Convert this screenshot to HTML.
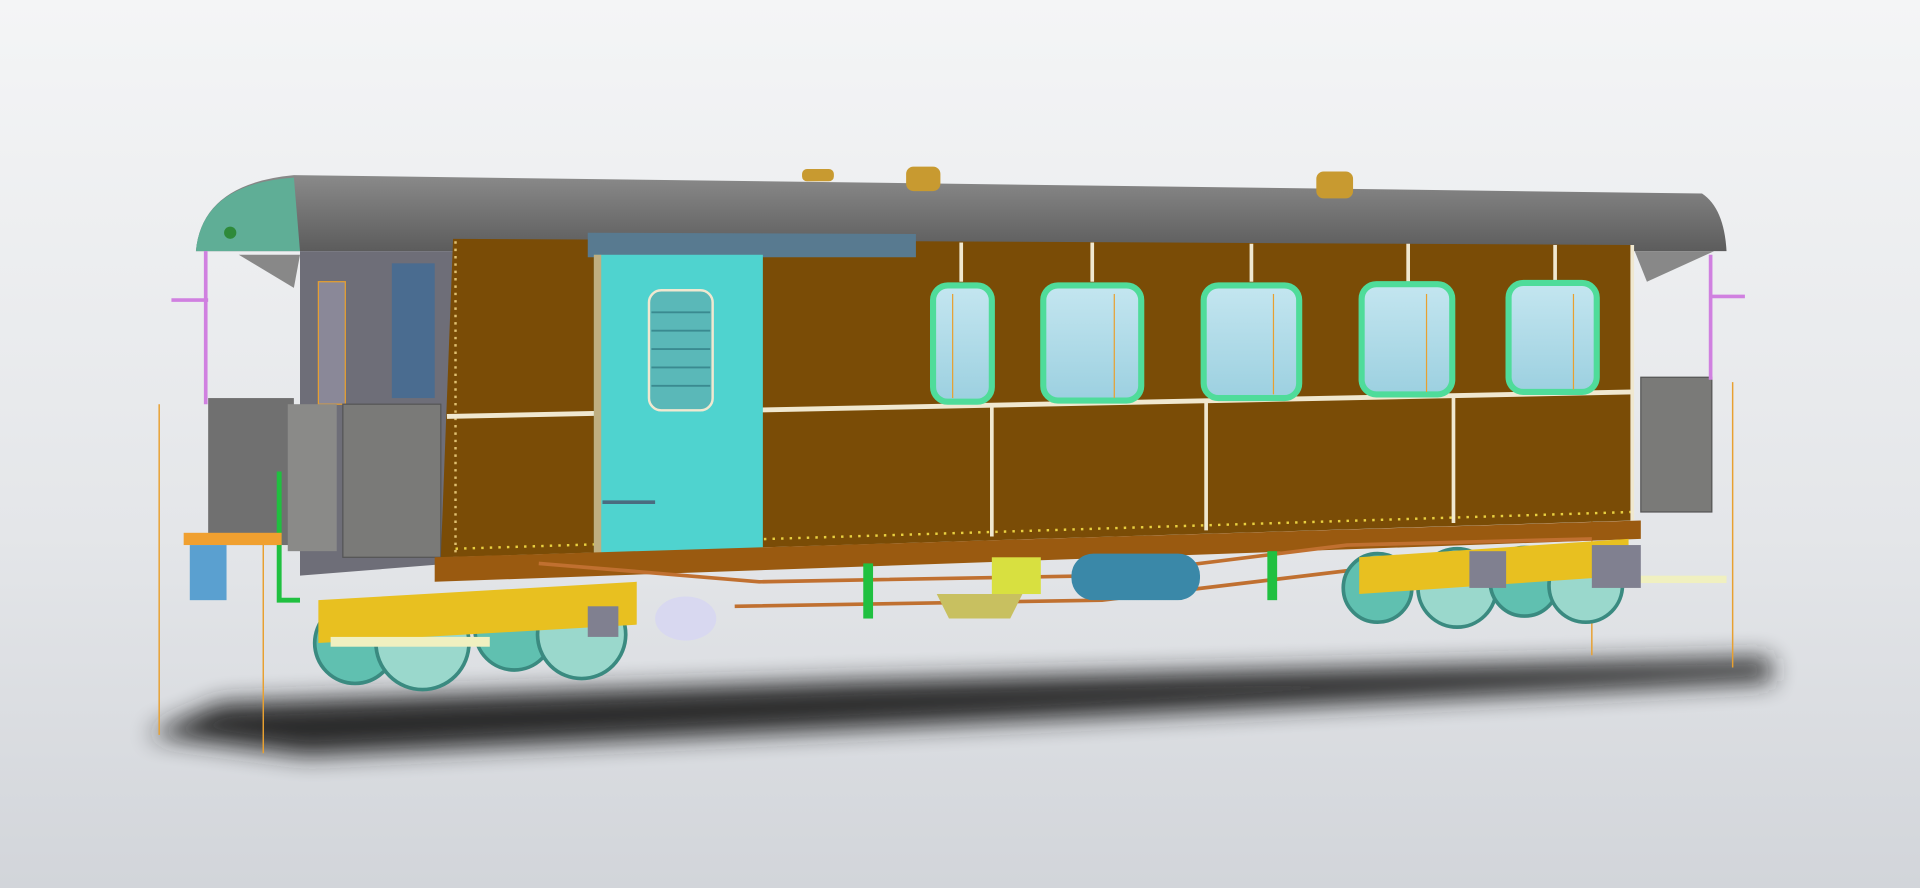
<!DOCTYPE html>
<html><head><meta charset="utf-8"><style>
html,body{margin:0;padding:0;width:1920px;height:888px;overflow:hidden;background:#e6e7ea}
svg{display:block}
</style></head><body>
<svg width="1920" height="888" viewBox="0 0 1568 725" preserveAspectRatio="none" xmlns="http://www.w3.org/2000/svg">
<defs>
<linearGradient id="bg" x1="0" y1="0" x2="0" y2="1">
<stop offset="0" stop-color="#f4f5f6"/><stop offset="0.6" stop-color="#e4e6e9"/><stop offset="1" stop-color="#d2d5da"/></linearGradient>
<filter id="blur" x="-10%" y="-50%" width="120%" height="200%"><feGaussianBlur stdDeviation="10"/></filter>
<linearGradient id="roof" x1="0" y1="0" x2="0" y2="1">
<stop offset="0" stop-color="#8a8a8a"/><stop offset="1" stop-color="#5c5c5c"/></linearGradient>
<linearGradient id="win" x1="0" y1="0" x2="0" y2="1">
<stop offset="0" stop-color="#c4e6f0"/><stop offset="1" stop-color="#9cd0e0"/></linearGradient>
</defs>
<rect width="1568" height="725" fill="url(#bg)"/>
<polygon points="120,600 180,574 700,556 1445,537 1448,556 900,585 250,617" fill="#222" filter="url(#blur)" opacity="0.95"/>
<g stroke="#e8a030" stroke-width="1.2"><line x1="130" y1="330" x2="130" y2="600"/><line x1="215" y1="330" x2="215" y2="615"/><line x1="1300" y1="330" x2="1300" y2="535"/><line x1="1415" y1="312" x2="1415" y2="545"/></g>
<path d="M160,205 Q165,150 240,143 L1390,158 Q1408,170 1410,205 Z" fill="url(#roof)"/>
<path d="M160,205 Q165,150 240,145 L245,205 Z" fill="#5fae96"/>
<circle cx="188" cy="190" r="5" fill="#2e8a3a"/>
<g fill="#c89a30"><rect x="655" y="138" width="26" height="10" rx="4"/><rect x="740" y="136" width="28" height="20" rx="6"/><rect x="1075" y="140" width="30" height="22" rx="6"/></g>
<polygon points="245,205 370,205 370,460 245,470" fill="#6e6e78"/>
<rect x="320" y="215" width="35" height="110" fill="#4a6c90"/>
<rect x="260" y="230" width="22" height="100" fill="#8a8898" stroke="#e8a030" stroke-width="1"/>
<rect x="280" y="330" width="80" height="125" fill="#7a7a78" stroke="#555" stroke-width="1"/>
<rect x="170" y="325" width="70" height="120" fill="#707070"/>
<rect x="235" y="330" width="40" height="120" fill="#8a8a88"/>
<path d="M195,208 L240,235 L245,208Z" fill="#888"/>
<g stroke="#d080e0" stroke-width="3"><line x1="168" y1="205" x2="168" y2="330"/><line x1="140" y1="245" x2="170" y2="245"/></g>
<path d="M228,385 L228,490 L245,490" stroke="#20c040" stroke-width="4" fill="none"/>
<rect x="150" y="435" width="80" height="10" fill="#f0a030"/>
<rect x="155" y="445" width="30" height="45" fill="#5aa0d0"/>
<polygon points="370,195 1333,200 1333,425 360,455" fill="#7a4c06"/>
<polyline points="372,197 372,453" stroke="#e0c070" stroke-width="2" stroke-dasharray="2,4"/>
<polyline points="365,340 1333,320" stroke="#f0e8d0" stroke-width="4"/>
<polyline points="372,448 1333,418" stroke="#e8d040" stroke-width="2" stroke-dasharray="2,5"/>
<g stroke="#f0e8d0" stroke-width="3">
<line x1="810" y1="330" x2="810" y2="438"/><line x1="985" y1="327" x2="985" y2="433"/><line x1="1187" y1="323" x2="1187" y2="427"/>
<line x1="785" y1="198" x2="785" y2="230"/><line x1="892" y1="198" x2="892" y2="230"/><line x1="1022" y1="199" x2="1022" y2="230"/><line x1="1150" y1="199" x2="1150" y2="230"/><line x1="1270" y1="200" x2="1270" y2="230"/>
<line x1="1333" y1="200" x2="1333" y2="425"/></g>
<polygon points="480,190 748,191 748,210 480,210" fill="#587a90"/>
<rect x="485" y="208" width="138" height="245" fill="#4fd3cf"/>
<rect x="485" y="208" width="6" height="245" fill="#f0a060" opacity="0.7"/>
<rect x="530" y="237" width="52" height="98" rx="10" fill="#5ab8b8" stroke="#f0e8d0" stroke-width="2"/>
<g stroke="#3a8a90" stroke-width="1.5"><line x1="532" y1="255" x2="580" y2="255"/><line x1="532" y1="270" x2="580" y2="270"/><line x1="532" y1="285" x2="580" y2="285"/><line x1="532" y1="300" x2="580" y2="300"/><line x1="532" y1="315" x2="580" y2="315"/></g>
<line x1="492" y1="410" x2="535" y2="410" stroke="#4a6c80" stroke-width="3"/>
<g stroke="#4fdc9a" stroke-width="5" fill="url(#win)">
<rect x="762" y="233" width="48" height="95" rx="12"/>
<rect x="852" y="233" width="80" height="94" rx="12"/>
<rect x="983" y="233" width="78" height="92" rx="12"/>
<rect x="1112" y="232" width="74" height="90" rx="12"/>
<rect x="1232" y="231" width="72" height="89" rx="12"/>
</g>
<g stroke="#e8a030" stroke-width="1"><line x1="778" y1="240" x2="778" y2="325"/><line x1="910" y1="240" x2="910" y2="325"/><line x1="1040" y1="240" x2="1040" y2="322"/><line x1="1165" y1="240" x2="1165" y2="320"/><line x1="1285" y1="240" x2="1285" y2="318"/></g>
<path d="M1335,205 L1400,205 L1345,230Z" fill="#888"/>
<rect x="1340" y="308" width="58" height="110" fill="#7a7a78" stroke="#555"/>
<g stroke="#d080e0" stroke-width="3"><line x1="1397" y1="208" x2="1397" y2="310"/><line x1="1397" y1="242" x2="1425" y2="242"/></g>
<polygon points="355,455 1340,425 1340,440 355,475" fill="#9a5a10"/>
<g stroke="#c07030" stroke-width="3" fill="none">
<path d="M440,460 L620,475 L900,470 L1100,445 L1300,440"/>
<path d="M600,495 L900,490 L1150,460"/>
</g>
<rect x="810" y="455" width="40" height="30" fill="#d8e040"/>
<rect x="875" y="452" width="105" height="38" rx="18" fill="#3a88a8"/>
<polygon points="765,485 835,485 825,505 775,505" fill="#c8c060"/>
<rect x="705" y="460" width="8" height="45" fill="#20c040"/>
<rect x="1035" y="450" width="8" height="40" fill="#20c040"/>
<g fill="#60c0b0" stroke="#3a8a80" stroke-width="3">
<circle cx="290" cy="525" r="33"/><circle cx="345" cy="525" r="38" fill="#9ad8cc"/><circle cx="420" cy="515" r="32"/><circle cx="475" cy="518" r="36" fill="#9ad8cc"/>
</g>
<polygon points="260,490 520,475 520,510 260,525" fill="#e8c020"/>
<rect x="270" y="520" width="130" height="8" fill="#f0f0c0"/>
<ellipse cx="560" cy="505" rx="25" ry="18" fill="#d8d8f0"/>
<rect x="480" y="495" width="25" height="25" fill="#808090"/>
<g fill="#60c0b0" stroke="#3a8a80" stroke-width="3">
<circle cx="1125" cy="480" r="28"/><circle cx="1190" cy="480" r="32" fill="#9ad8cc"/><circle cx="1245" cy="475" r="28"/><circle cx="1295" cy="478" r="30" fill="#9ad8cc"/>
</g>
<polygon points="1110,455 1330,440 1330,470 1110,485" fill="#e8c020"/>
<rect x="1320" y="470" width="90" height="6" fill="#f0f0c0"/>
<rect x="1300" y="445" width="40" height="35" fill="#808090"/>
<rect x="1200" y="450" width="30" height="30" fill="#808090"/>
</svg>
</body></html>
